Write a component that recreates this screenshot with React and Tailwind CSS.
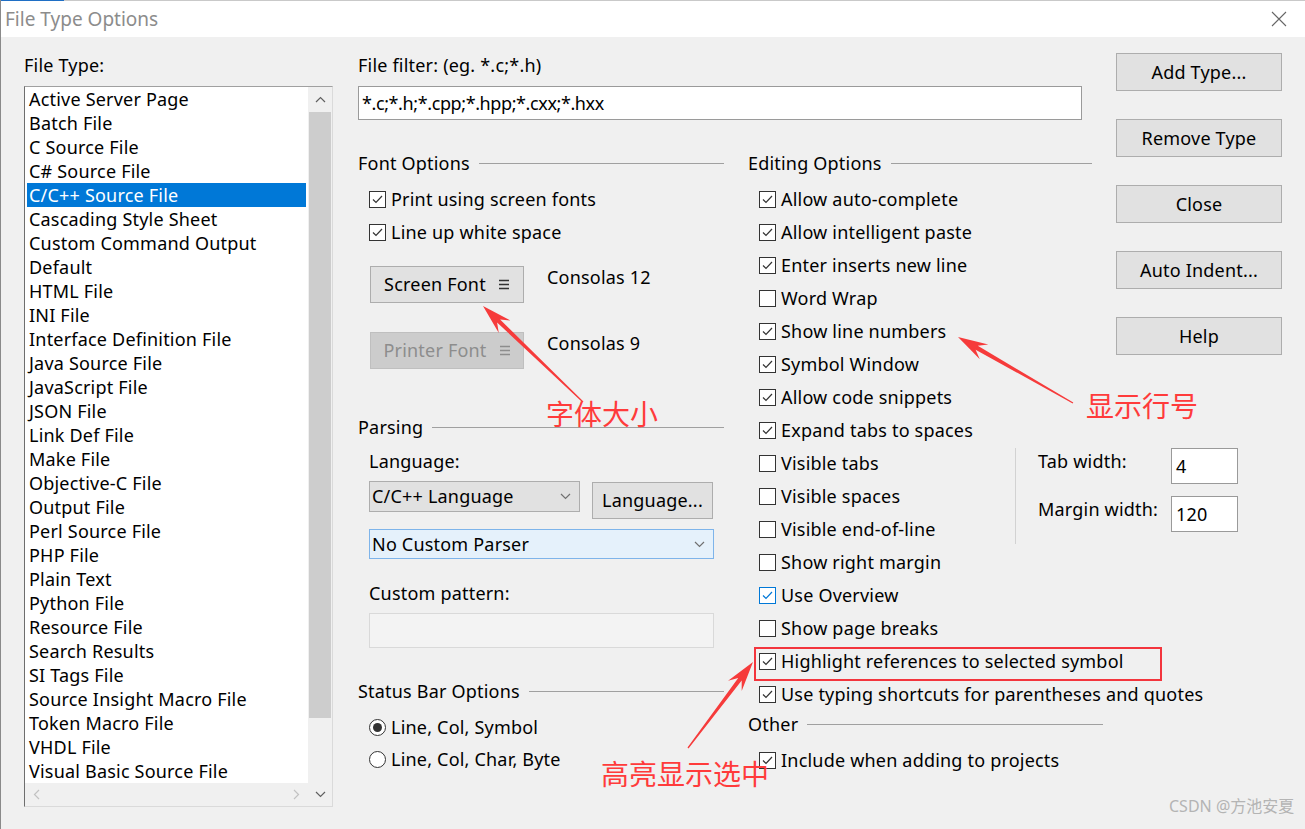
import React from "react";

const fileTypes = [
    "Active Server Page",
    "Batch File",
    "C Source File",
    "C# Source File",
    "C/C++ Source File",
    "Cascading Style Sheet",
    "Custom Command Output",
    "Default",
    "HTML File",
    "INI File",
    "Interface Definition File",
    "Java Source File",
    "JavaScript File",
    "JSON File",
    "Link Def File",
    "Make File",
    "Objective-C File",
    "Output File",
    "Perl Source File",
    "PHP File",
    "Plain Text",
    "Python File",
    "Resource File",
    "Search Results",
    "SI Tags File",
    "Source Insight Macro File",
    "Token Macro File",
    "VHDL File",
    "Visual Basic Source File",
];

const editTop = [
    ["Allow auto-complete", true],
    ["Allow intelligent paste", true],
    ["Enter inserts new line", true],
    ["Word Wrap", false],
    ["Show line numbers", true],
    ["Symbol Window", true],
    ["Allow code snippets", true],
    ["Expand tabs to spaces", true],
];

const editMid = [
    ["Visible tabs", false],
    ["Visible spaces", false],
    ["Visible end-of-line", false],
];

const editBottom = [
    ["Show right margin", false],
    ["Use Overview", true, true],
    ["Show page breaks", false],
    ["Highlight references to selected symbol", true],
    ["Use typing shortcuts for parentheses and quotes", true],
];

function CheckBox({ checked, blue }) {
    return (
        <span
            className={
                "flex h-[17px] w-[17px] shrink-0 items-center justify-center border bg-white " +
                (blue ? "border-[#0078d7]" : "border-[#333333]")
            }
        >
            {checked && (
                <svg width="13" height="13" viewBox="0 0 13 13">
                    <path
                        d="M2 6.5 L5 9.5 L11 3"
                        fill="none"
                        stroke={blue ? "#0078d7" : "#333333"}
                        strokeWidth="1.2"
                    />
                </svg>
            )}
        </span>
    );
}

function CheckRow({ label, checked, blue }) {
    return (
        <div className="flex h-[33px] items-center gap-[5px] whitespace-nowrap">
            <CheckBox checked={checked} blue={blue} />
            <span>{label}</span>
        </div>
    );
}

function Radio({ label, checked }) {
    return (
        <div className="flex h-[32px] items-center gap-[5px] whitespace-nowrap">
            <span className="flex h-[17px] w-[17px] items-center justify-center rounded-full border border-[#333333] bg-white">
                {checked && <span className="h-[9px] w-[9px] rounded-full bg-[#333333]" />}
            </span>
            <span>{label}</span>
        </div>
    );
}

function GroupHeader({ title, className = "" }) {
    return (
        <div className={"flex h-[24px] items-center " + className}>
            <span className="whitespace-nowrap leading-[24px]">{title}</span>
            <div className="ml-[9px] h-px flex-1 bg-[#a0a0a0]" />
        </div>
    );
}

function Button({ children, className = "" }) {
    return (
        <div
            className={
                "flex items-center justify-center border border-[#adadad] bg-[#e1e1e1] " +
                className
            }
        >
            {children}
        </div>
    );
}

function Chevron({ up = false, color = "#606060" }) {
    return (
        <svg width="11" height="7" viewBox="0 0 11 7">
            <path
                d={up ? "M1 6 L5.5 1.5 L10 6" : "M1 1 L5.5 5.5 L10 1"}
                fill="none"
                stroke={color}
                strokeWidth="1.2"
            />
        </svg>
    );
}

function MenuIcon({ color }) {
    return (
        <svg width="12" height="11" viewBox="0 0 12 11">
            <path d="M1 1.5 H11 M1 5.5 H11 M1 9.5 H11" stroke={color} strokeWidth="1.3" />
        </svg>
    );
}

function arrowPoints(x1, y1, x2, y2) {
    const dx = x2 - x1;
    const dy = y2 - y1;
    const len = Math.hypot(dx, dy);
    const ux = dx / len;
    const uy = dy / len;
    const nx = -uy;
    const ny = ux;
    const headLen = 30;
    const neckX = x2 - ux * headLen * 0.72;
    const neckY = y2 - uy * headLen * 0.72;
    const barbX = x2 - ux * headLen;
    const barbY = y2 - uy * headLen;
    const pts = [
        [x1 + nx * 0.6, y1 + ny * 0.6],
        [neckX + nx * 2.2, neckY + ny * 2.2],
        [barbX + nx * 8.5, barbY + ny * 8.5],
        [x2, y2],
        [barbX - nx * 8.5, barbY - ny * 8.5],
        [neckX - nx * 2.2, neckY - ny * 2.2],
        [x1 - nx * 0.6, y1 - ny * 0.6],
    ];
    return pts.map((p) => p[0].toFixed(1) + "," + p[1].toFixed(1)).join(" ");
}

export default function App() {
    return (
        <div className="relative h-[829px] w-[1305px] overflow-hidden border-l border-[#8a8a8a] bg-[#f0f0f0] font-['Noto_Sans',sans-serif] text-[18px] tracking-[0.2px] text-black">
            {/* window title */}
            <div className="flex h-px">
                <div className="w-[63px] bg-[#1f6fc5]" />
                <div className="flex-1 bg-[#c9c9c9]" />
            </div>
            <div className="flex h-[36px] items-center justify-between bg-white pl-[4px] pr-[18px]">
                <span className="text-[19px] tracking-normal text-[#8c8c8c]">File Type Options</span>
                <svg width="16" height="16" viewBox="0 0 16 16">
                    <path d="M1 1 L15 15 M15 1 L1 15" stroke="#666666" strokeWidth="1.1" />
                </svg>
            </div>

            <div className="flex pl-[23px] pt-[16px]">
                {/* file type list */}
                <div className="flex w-[309px] shrink-0 flex-col">
                    <div className="h-[24px] leading-[24px]">File Type:</div>
                    <div className="mt-[9px] flex h-[721px] border border-[#a0a0a0] border-b-[#dadada] border-l-[#6e6e6e] border-r-[#dadada] bg-white">
                        <div className="flex flex-1 flex-col overflow-hidden">
                            <div className="flex-1">
                                {fileTypes.map((name) => (
                                    <div
                                        key={name}
                                        className={
                                            "mx-[2px] h-[24px] whitespace-nowrap pl-[2px] leading-[24px] " +
                                            (name === "C/C++ Source File"
                                                ? "bg-[#0078d7] text-white"
                                                : "")
                                        }
                                    >
                                        {name}
                                    </div>
                                ))}
                            </div>
                            <div className="flex h-[24px] items-center justify-between bg-[#f0f0f0] px-[8px]">
                                <svg width="7" height="11" viewBox="0 0 7 11">
                                    <path d="M6 1 L1.5 5.5 L6 10" fill="none" stroke="#c2c2c2" strokeWidth="1.2" />
                                </svg>
                                <svg width="7" height="11" viewBox="0 0 7 11">
                                    <path d="M1 1 L5.5 5.5 L1 10" fill="none" stroke="#c2c2c2" strokeWidth="1.2" />
                                </svg>
                            </div>
                        </div>
                        <div className="flex w-[24px] shrink-0 flex-col bg-[#f0f0f0]">
                            <div className="flex h-[25px] items-center justify-center">
                                <Chevron up />
                            </div>
                            <div className="mx-px h-[606px] bg-[#cdcdcd]" />
                            <div className="flex-1" />
                            <div className="flex h-[24px] items-center justify-center">
                                <Chevron />
                            </div>
                        </div>
                    </div>
                </div>

                {/* main area */}
                <div className="ml-[25px] flex w-[734px] shrink-0 flex-col">
                    <div className="h-[24px] leading-[24px]">File filter: (eg. *.c;*.h)</div>
                    <div className="mt-[9px] flex h-[34px] w-[724px] items-center border border-[#9a9a9a] bg-white pl-[3px] tracking-[-0.4px]">
                        *.c;*.h;*.cpp;*.hpp;*.cxx;*.hxx
                    </div>

                    <div className="mt-[31px] flex">
                        {/* font / parsing / status bar */}
                        <div className="flex w-[366px] shrink-0 flex-col">
                            <GroupHeader title="Font Options" />
                            <div className="mt-[8px] pl-[11px]">
                                <CheckRow label="Print using screen fonts" checked />
                                <CheckRow label="Line up white space" checked />
                                <div className="mt-[17px] flex items-start">
                                    <Button className="ml-px h-[37px] w-[154px] shrink-0 gap-[12px]">
                                        <span>Screen Font</span>
                                        <MenuIcon color="#333333" />
                                    </Button>
                                    <span className="ml-[23px] mt-[-1px] whitespace-nowrap leading-[24px]">Consolas 12</span>
                                </div>
                                <div className="mt-[29px] flex items-start">
                                    <div className="ml-px flex h-[37px] w-[154px] shrink-0 items-center justify-center gap-[12px] border border-[#bfbfbf] bg-[#cccccc] text-[#8d8d8d]">
                                        <span>Printer Font</span>
                                        <MenuIcon color="#8d8d8d" />
                                    </div>
                                    <span className="ml-[23px] mt-[-1px] whitespace-nowrap leading-[24px]">Consolas 9</span>
                                </div>
                            </div>

                            <GroupHeader title="Parsing" className="mt-[46px]" />
                            <div className="pl-[11px]">
                                <div className="mt-[10px] h-[24px] leading-[24px]">Language:</div>
                                <div className="mt-[8px] flex items-start">
                                    <div className="flex h-[31px] w-[211px] shrink-0 items-center justify-between border border-[#adadad] bg-[#e1e1e1] pl-[2px] pr-[8px]">
                                        <span className="whitespace-nowrap">C/C++ Language</span>
                                        <Chevron color="#707070" />
                                    </div>
                                    <Button className="ml-[12px] mt-px h-[37px] w-[121px] shrink-0">Language...</Button>
                                </div>
                                <div className="mt-[10px] flex h-[30px] w-[345px] items-center justify-between border border-[#7eb4ea] bg-[#e5f1fb] pl-[2px] pr-[8px]">
                                    <span>No Custom Parser</span>
                                    <Chevron color="#707070" />
                                </div>
                                <div className="mt-[22px] h-[24px] leading-[24px]">Custom pattern:</div>
                                <div className="mt-[8px] h-[35px] w-[345px] border border-[#d9d9d9] bg-[#f3f3f3]" />
                            </div>

                            <GroupHeader title="Status Bar Options" className="mt-[31px]" />
                            <div className="mt-[8px] pl-[11px]">
                                <Radio label="Line, Col, Symbol" checked />
                                <Radio label="Line, Col, Char, Byte" />
                            </div>
                        </div>

                        {/* editing options */}
                        <div className="ml-[24px] flex w-[344px] shrink-0 flex-col">
                            <GroupHeader title="Editing Options" />
                            <div className="mt-[8px] pl-[11px]">
                                {editTop.map(([label, checked]) => (
                                    <CheckRow key={label} label={label} checked={checked} />
                                ))}
                                <div className="flex">
                                    <div className="w-[256px] shrink-0">
                                        {editMid.map(([label, checked]) => (
                                            <CheckRow key={label} label={label} checked={checked} />
                                        ))}
                                    </div>
                                    <div className="mt-px h-[96px] w-px shrink-0 bg-[#d2d2d2]" />
                                    <div className="shrink-0 pl-[22px] pt-px">
                                        <div className="flex items-start">
                                            <span className="mt-px w-[133px] shrink-0 whitespace-nowrap leading-[24px]">Tab width:</span>
                                            <div className="flex h-[36px] w-[67px] shrink-0 items-center border border-[#9a9a9a] bg-white pl-[4px]">
                                                4
                                            </div>
                                        </div>
                                        <div className="mt-[12px] flex items-start">
                                            <span className="mt-px w-[133px] shrink-0 whitespace-nowrap leading-[24px]">Margin width:</span>
                                            <div className="flex h-[36px] w-[67px] shrink-0 items-center border border-[#9a9a9a] bg-white pl-[4px]">
                                                120
                                            </div>
                                        </div>
                                    </div>
                                </div>
                                {editBottom.map(([label, checked, blue]) => (
                                    <CheckRow key={label} label={label} checked={checked} blue={blue} />
                                ))}
                            </div>
                            <GroupHeader title="Other" className="mt-px w-[355px]" />
                            <div className="mt-[8px] pl-[11px]">
                                <CheckRow label="Include when adding to projects" checked />
                            </div>
                        </div>
                    </div>
                </div>

                {/* buttons */}
                <div className="ml-[24px] flex w-[166px] shrink-0 flex-col gap-[28px]">
                    <Button className="h-[38px]">Add Type...</Button>
                    <Button className="h-[38px]">Remove Type</Button>
                    <Button className="h-[38px]">Close</Button>
                    <Button className="h-[38px]">Auto Indent...</Button>
                    <Button className="h-[38px]">Help</Button>
                </div>
            </div>

            {/* red annotations */}
            <svg className="pointer-events-none absolute left-0 top-0" width="1305" height="829">
                <polygon points={arrowPoints(582, 402, 482, 306)} fill="#f63b3b" />
                <polygon points={arrowPoints(1072, 403, 957, 337)} fill="#f63b3b" />
                <polygon points={arrowPoints(687, 748, 752, 662)} fill="#f63b3b" />
            </svg>
            <div className="pointer-events-none absolute left-[753px] top-[647px] h-[34px] w-[408px] border-2 border-[#f3353d]" />
            <div className="absolute left-[545px] top-[399px] font-['Noto_Sans_CJK_SC',sans-serif] text-[28px] leading-none tracking-normal text-[#ff3b3b]">
                字体大小
            </div>
            <div className="absolute left-[1085px] top-[391px] font-['Noto_Sans_CJK_SC',sans-serif] text-[28px] leading-none tracking-normal text-[#ff3b3b]">
                显示行号
            </div>
            <div className="absolute left-[600px] top-[759px] font-['Noto_Sans_CJK_SC',sans-serif] text-[28px] leading-none tracking-normal text-[#ff3b3b]">
                高亮显示选中
            </div>
            <div className="absolute left-[1168px] top-[795px] font-['Noto_Sans','Noto_Sans_CJK_SC',sans-serif] text-[16px] leading-[22px] tracking-normal text-[#b4b4b4]">
                CSDN @方池安夏
            </div>
        </div>
    );
}
